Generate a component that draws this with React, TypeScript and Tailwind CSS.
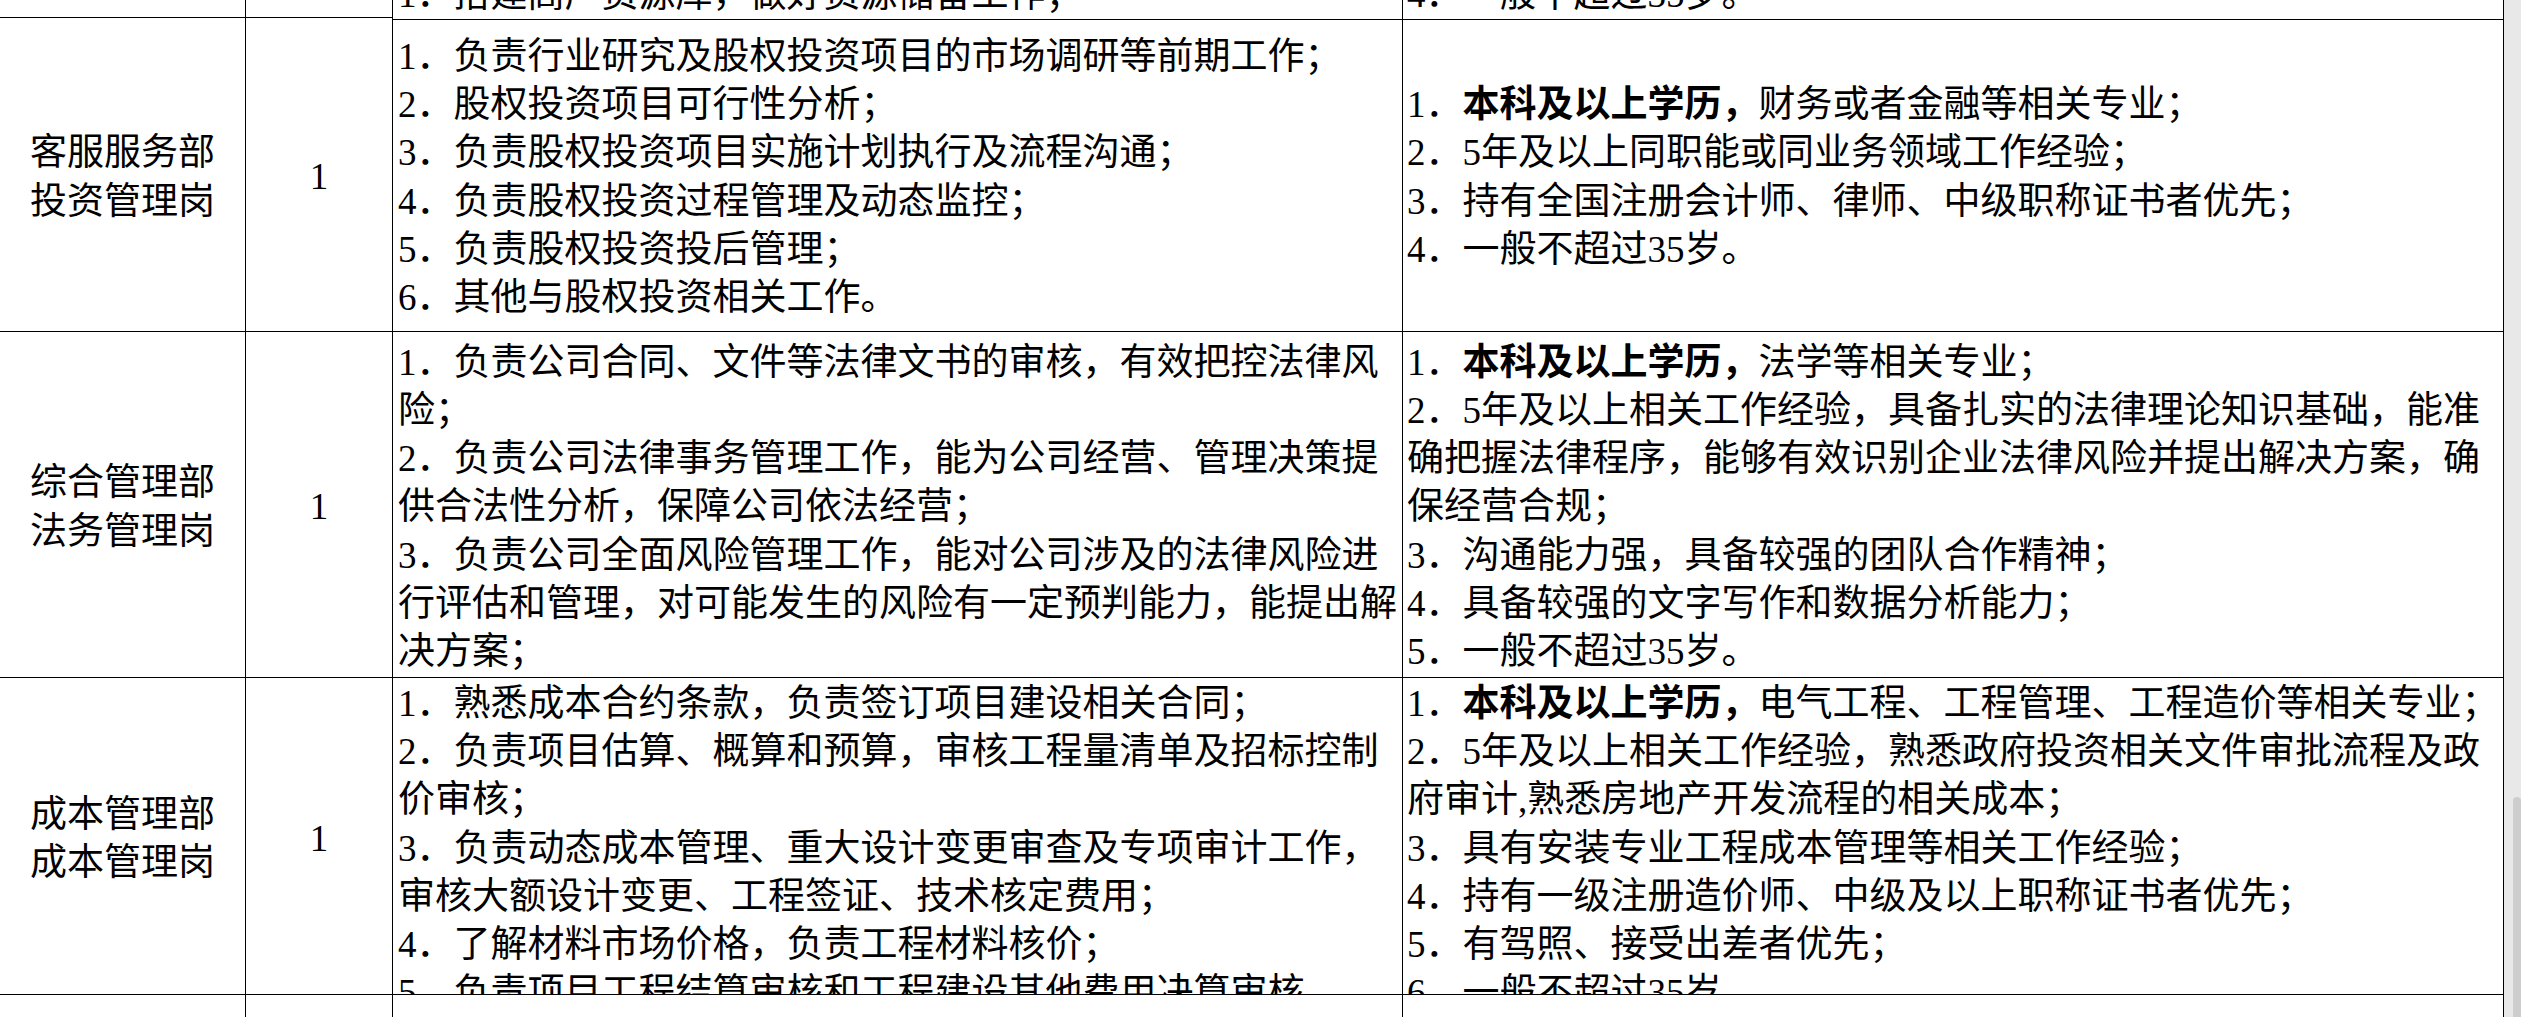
import React from "react";

type L = React.ReactNode;

const B = ({ children }: { children: React.ReactNode }) => <span className="font-bold">{children}</span>;

function Lines({ lines }: { lines: L[] }) {
  return (
    <>
      {lines.map((l, i) => (
        <div key={i} className="whitespace-nowrap leading-[48.2px] h-[48.2px] shrink-0">
          {l}
        </div>
      ))}
    </>
  );
}

const cell = "border-r border-b border-black overflow-hidden flex flex-col min-h-0";

function Row({
  name,
  count,
  duties,
  reqs,
  mode,
}: {
  name: string[];
  count: string;
  duties: L[];
  reqs: L[];
  mode: "top" | "center" | "end";
}) {
  const v =
    mode === "center" ? "justify-center pt-[6px]" : mode === "top" ? "justify-start pt-[2px]" : "justify-end";
  const centerV = mode === "end" ? "justify-end" : "justify-center pt-[6px]";
  return (
    <>
      <div className={`${cell} ${centerV} items-center text-center`}>
        {mode !== "end" && <Lines lines={name} />}
      </div>
      <div className={`${cell} ${centerV} items-center text-center`}>
        {mode !== "end" && <Lines lines={[count]} />}
      </div>
      <div className={`${cell} ${v} pl-[5px] ${mode === "end" ? "mb-[-2px]" : ""}`}>
        <Lines lines={duties} />
      </div>
      <div className={`${cell} ${v} pl-[4px] ${mode === "end" ? "mb-[-2px]" : ""}`}>
        <Lines lines={reqs} />
      </div>
    </>
  );
}

export default function App() {
  return (
    <div className="w-[2521px] h-[1017px] overflow-hidden bg-white text-black flex font-['Liberation_Serif','Noto_Sans_CJK_SC',serif] text-[37px]">
      <div className="grid grid-cols-[246px_147px_1010px_1101px] grid-rows-[18px_314px_346px_317px_1fr] w-[2504px] h-[1017px]">
        <Row
          mode="end"
          name={[]}
          count=""
          duties={["1．搭建高产资源库，做好资源储备工作；"]}
          reqs={["4．一般不超过35岁。"]}
        />
        <Row
          mode="center"
          name={["客服服务部", "投资管理岗"]}
          count="1"
          duties={[
            "1．负责行业研究及股权投资项目的市场调研等前期工作；",
            "2．股权投资项目可行性分析；",
            "3．负责股权投资项目实施计划执行及流程沟通；",
            "4．负责股权投资过程管理及动态监控；",
            "5．负责股权投资投后管理；",
            "6．其他与股权投资相关工作。",
          ]}
          reqs={[
            <>
              1．<B>本科及以上学历，</B>财务或者金融等相关专业；
            </>,
            "2．5年及以上同职能或同业务领域工作经验；",
            "3．持有全国注册会计师、律师、中级职称证书者优先；",
            "4．一般不超过35岁。",
          ]}
        />
        <Row
          mode="center"
          name={["综合管理部", "法务管理岗"]}
          count="1"
          duties={[
            "1．负责公司合同、文件等法律文书的审核，有效把控法律风",
            "险；",
            "2．负责公司法律事务管理工作，能为公司经营、管理决策提",
            "供合法性分析，保障公司依法经营；",
            "3．负责公司全面风险管理工作，能对公司涉及的法律风险进",
            "行评估和管理，对可能发生的风险有一定预判能力，能提出解",
            "决方案；",
          ]}
          reqs={[
            <>
              1．<B>本科及以上学历，</B>法学等相关专业；
            </>,
            "2．5年及以上相关工作经验，具备扎实的法律理论知识基础，能准",
            "确把握法律程序，能够有效识别企业法律风险并提出解决方案，确",
            "保经营合规；",
            "3．沟通能力强，具备较强的团队合作精神；",
            "4．具备较强的文字写作和数据分析能力；",
            "5．一般不超过35岁。",
          ]}
        />
        <Row
          mode="top"
          name={["成本管理部", "成本管理岗"]}
          count="1"
          duties={[
            "1．熟悉成本合约条款，负责签订项目建设相关合同；",
            "2．负责项目估算、概算和预算，审核工程量清单及招标控制",
            "价审核；",
            "3．负责动态成本管理、重大设计变更审查及专项审计工作，",
            "审核大额设计变更、工程签证、技术核定费用；",
            "4．了解材料市场价格，负责工程材料核价；",
            "5．负责项目工程结算审核和工程建设其他费用决算审核",
          ]}
          reqs={[
            <>
              1．<B>本科及以上学历，</B>电气工程、工程管理、工程造价等相关专业；
            </>,
            "2．5年及以上相关工作经验，熟悉政府投资相关文件审批流程及政",
            "府审计,熟悉房地产开发流程的相关成本；",
            "3．具有安装专业工程成本管理等相关工作经验；",
            "4．持有一级注册造价师、中级及以上职称证书者优先；",
            "5．有驾照、接受出差者优先；",
            "6．一般不超过35岁。",
          ]}
        />
        <div className="border-r border-black" />
        <div className="border-r border-black" />
        <div className="border-r border-black" />
        <div className="border-r border-black" />
      </div>
      <div className="w-[17px] h-[1017px] bg-[#e8e8e8] flex flex-col justify-end">
        <div className="ml-[9px] w-[8px] h-[220px] rounded-t-[4px] bg-[#cdcdcd]" />
      </div>
    </div>
  );
}
